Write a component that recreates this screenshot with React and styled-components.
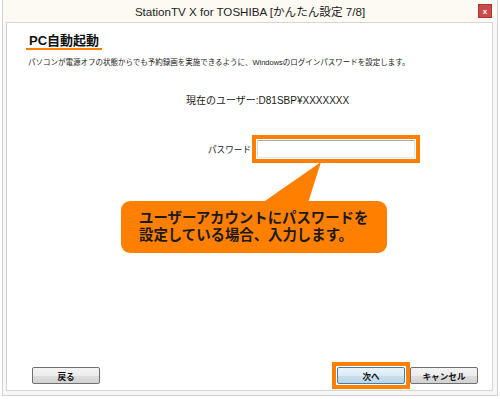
import styled, { createGlobalStyle } from "styled-components";

const GlobalStyle = createGlobalStyle`
  html, body {
    margin: 0;
    padding: 0;
    background: #ffffff;
  }
  body {
    font-family: "Liberation Sans", "Noto Sans CJK JP", sans-serif;
    color: #1a1a1a;
  }
`;

const ORANGE = "#ff8000";

const Page = styled.div`
  width: 500px;
  height: 399px;
  box-sizing: border-box;
  padding: 0 2px 3px 2px;
  display: flex;
`;

const Window = styled.div`
  flex: 1;
  display: flex;
  flex-direction: column;
  border: 1px solid #d2d2d2;
  border-top: none;
  background: #f7f7f5;
`;

const TitleBar = styled.div`
  height: 22px;
  display: grid;
  grid-template-columns: 1fr auto 1fr;
  align-items: center;
  background: #fcfaf2;

  .title {
    font-size: 11.6px;
    color: #222;
    white-space: nowrap;
  }
`;

const CloseButton = styled.div`
  grid-column: 3;
  justify-self: end;
  margin-right: 5px;
  width: 14px;
  height: 14px;
  box-sizing: border-box;
  border: 1px solid #b03535;
  background: #c94b4b;
  color: #ffffff;
  font: bold 8px "Liberation Sans", sans-serif;
  display: flex;
  align-items: center;
  justify-content: center;
`;

const Frame = styled.div`
  flex: 1;
  display: flex;
  padding: 0 4px 4px 3px;
`;

const Panel = styled.div`
  flex: 1;
  display: flex;
  flex-direction: column;
  align-items: flex-start;
  border: 1px solid #d6d6d6;
  background: #ffffff;
`;

const Heading = styled.h1`
  margin: 10px 0 0 19px;
  padding: 0 3px;
  font-size: 13px;
  line-height: 15px;
  font-weight: bold;
  color: #111;
  border-bottom: 2px solid ${ORANGE};
`;

const Description = styled.p`
  margin: 8px 0 0 21px;
  font-size: 7.5px;
  line-height: 10px;
  white-space: nowrap;
`;

const UserLine = styled.p`
  margin: 27px 0 0 179px;
  font-size: 10px;
  line-height: 12px;
  white-space: nowrap;
`;

const PasswordRow = styled.div`
  margin: 28px 0 0 201px;
  display: flex;
  align-items: center;
  gap: 1px;

  label {
    font-size: 8.6px;
    white-space: nowrap;
  }
`;

const Highlight = styled.div`
  border: 4px solid ${ORANGE};
  padding: 1px;
  background: #ffffff;
  display: flex;
`;

const TextBox = styled.div`
  width: ${(p) => p.$width}px;
  height: 18px;
  box-sizing: border-box;
  border: 1px solid #e0e7ee;
  border-top-color: #a8a8a8;
  border-left-color: #d8dde2;
  background: #ffffff;
`;

const CalloutWrap = styled.div`
  position: relative;
  margin: 38px 0 0 114px;
`;

const Pointer = styled.svg`
  position: absolute;
  left: 0;
  top: -39px;
`;

const Callout = styled.div`
  width: 266px;
  height: 52px;
  box-sizing: border-box;
  padding: 9px 0 0 18px;
  border-radius: 9px;
  background: ${ORANGE};
  font-size: 14.4px;
  line-height: 17px;
  font-weight: bold;
  color: #1a1a1a;
  white-space: nowrap;
`;

const ButtonRow = styled.div`
  margin-top: auto;
  align-self: stretch;
  display: flex;
  align-items: center;
  padding: 0 14px 1px 25px;

  .spacer {
    flex: 1;
  }
`;

const Button = styled.div`
  width: 68px;
  height: 17px;
  box-sizing: border-box;
  border: 1px solid ${(p) => (p.$primary ? "#3c7fb1" : "#707070")};
  border-radius: 2px;
  background: ${(p) =>
    p.$primary
      ? "linear-gradient(#eaf4fa 0%, #dcebf4 50%, #c9dfec 50%, #bed6e4 100%)"
      : "linear-gradient(#f4f4f4 0%, #ececec 50%, #dedede 50%, #d2d2d2 100%)"};
  display: flex;
  align-items: center;
  justify-content: center;
  font-size: 8.6px;
  font-weight: bold;
  color: #111;
`;

export default function App() {
  return (
    <>
      <GlobalStyle />
      <Page>
        <Window>
          <TitleBar>
            <span />
            <span className="title">StationTV X for TOSHIBA [かんたん設定 7/8]</span>
            <CloseButton>x</CloseButton>
          </TitleBar>
          <Frame>
            <Panel>
              <Heading>PC自動起動</Heading>
              <Description>
                パソコンが電源オフの状態からでも予約録画を実施できるように、Windowsのログインパスワードを設定します。
              </Description>
              <UserLine>現在のユーザー:D81SBP¥XXXXXXX</UserLine>
              <PasswordRow>
                <label>パスワード</label>
                <Highlight>
                  <TextBox $width={158} />
                </Highlight>
              </PasswordRow>
              <CalloutWrap>
                <Pointer width="210" height="41" viewBox="0 0 210 41">
                  <polygon points="141,41 187,41 200,0" fill={ORANGE} />
                </Pointer>
                <Callout>
                  ユーザーアカウントにパスワードを
                  <br />
                  設定している場合、入力します。
                </Callout>
              </CalloutWrap>
              <ButtonRow>
                <Button>戻る</Button>
                <span className="spacer" />
                <Highlight>
                  <Button $primary>次へ</Button>
                </Highlight>
                <Button>キャンセル</Button>
              </ButtonRow>
            </Panel>
          </Frame>
        </Window>
      </Page>
    </>
  );
}
